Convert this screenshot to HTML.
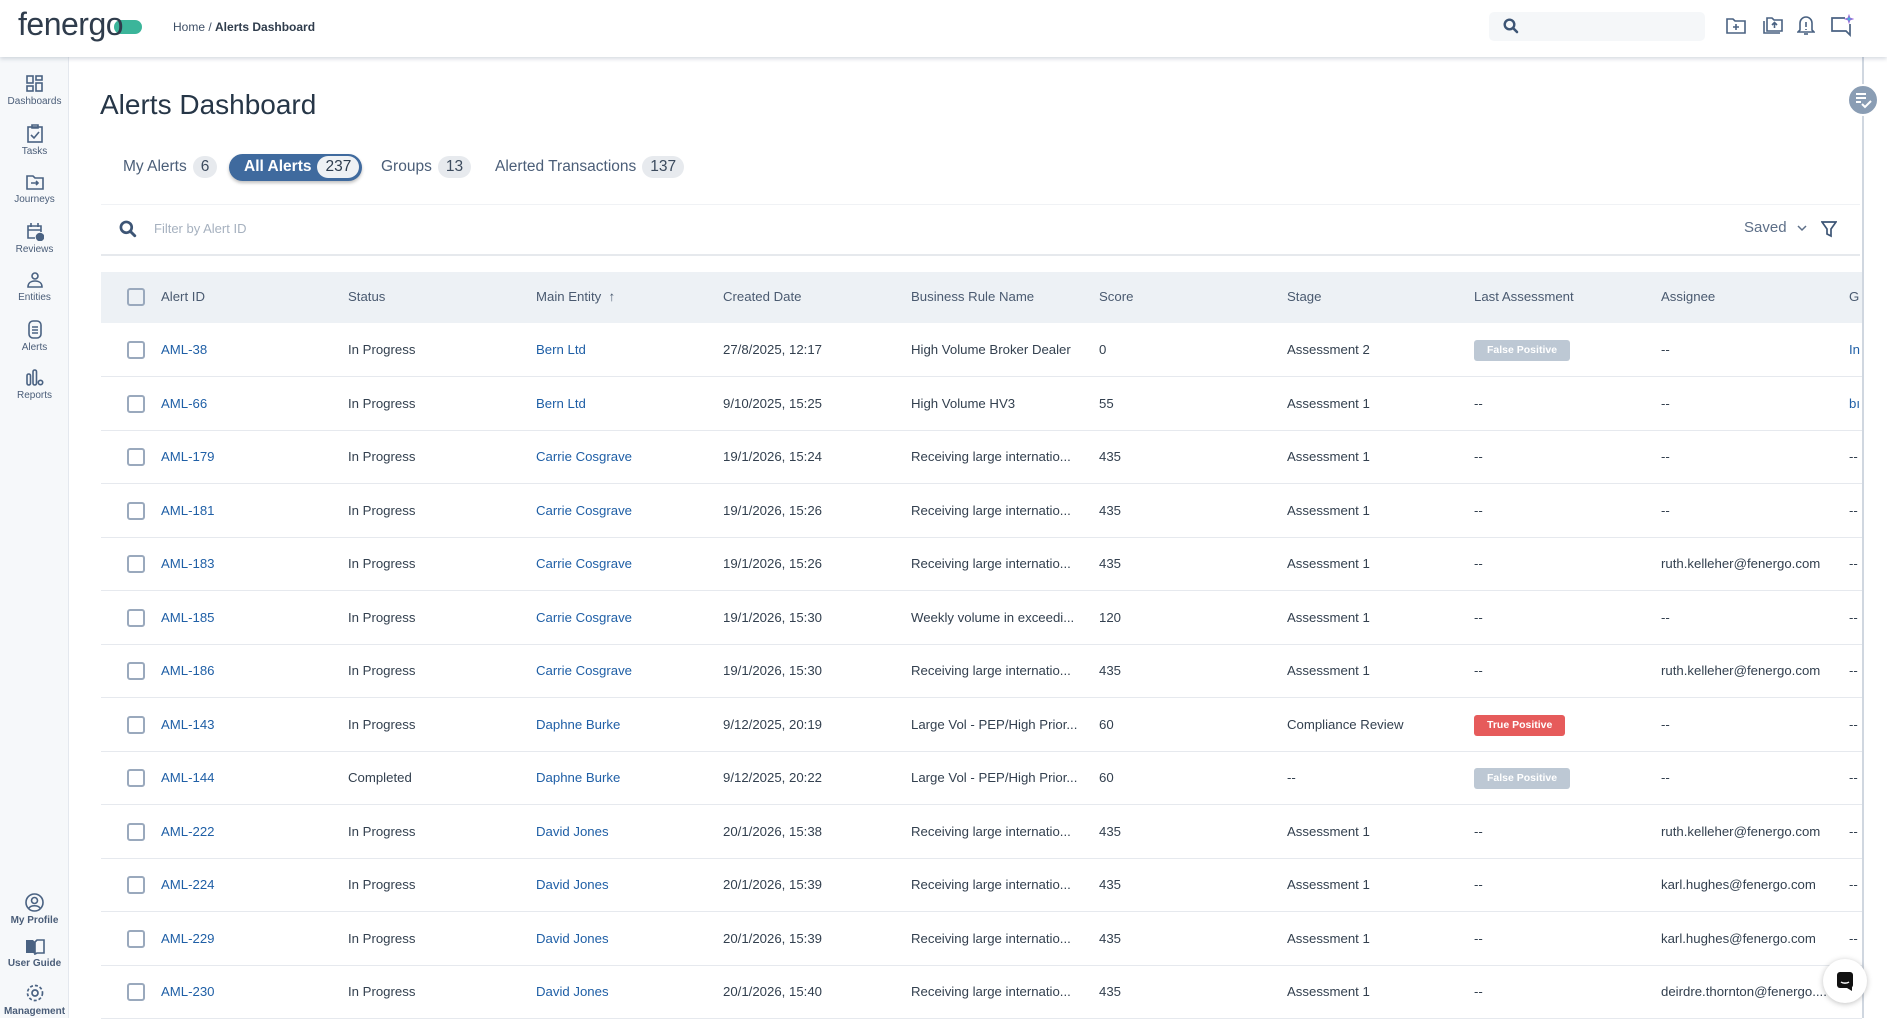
<!DOCTYPE html>
<html><head><meta charset="utf-8"><style>
*{margin:0;padding:0;box-sizing:border-box}
body{width:1887px;height:1018px;overflow:hidden;background:#fff;font-family:"Liberation Sans",sans-serif;color:#2e3d4f;position:relative}
.hdr{position:absolute;left:0;top:0;width:1887px;height:57px;background:#fff;box-shadow:0 2px 4px rgba(60,80,110,.2);z-index:5}
.side{position:absolute;left:0;top:57px;width:69px;height:961px;background:#f6f8fa;border-right:1px solid #e4e8ee}
.si{position:absolute;left:0;width:69px;text-align:center;font-size:10px;color:#4a5d78}
.si svg{display:block;margin:0 auto 3px}
.abs{position:absolute}
.tab{position:absolute;top:156px;font-size:15.5px;color:#4b5e78;height:22px;line-height:22px}
.bd{display:inline-block;background:#e7eaee;border-radius:11px;padding:0 8px;margin-left:6px;color:#3c4b5e}
.row{position:absolute;left:101px;width:1761px;height:54px;border-bottom:1px solid #e6e9ee;font-size:13.2px;color:#33404f}
.row span{position:absolute;top:0;line-height:53px;white-space:nowrap}
.cb{position:absolute;left:26px;top:18px;width:18px;height:18px;border:2px solid #9aa9bd;border-radius:3px;background:#fff}
.lk{color:#1f5fa6}
.fp,.tp{display:inline-block;line-height:20px;height:21px;padding:0 13px;border-radius:3px;color:#fff;font-weight:bold;font-size:10.5px;vertical-align:middle}
.fp{background:#bdc8d4}.tp{background:#e65b5b}
</style></head><body>
<div class="hdr">
 <div class="abs" style="left:18px;top:6px;font-size:32px;color:#2f3c4c;letter-spacing:-0.5px">fenerg<span style="position:relative">o<span style="position:absolute;left:8px;top:14px;width:28px;height:14px;border-radius:7px;background:#3bb59a;z-index:-1"></span></span></div>
 <div class="abs" style="left:173px;top:20px;font-size:12px;color:#3e4f66">Home / <b style="color:#2f3c4c">Alerts Dashboard</b></div>
 <div class="abs" style="left:1489px;top:12px;width:216px;height:29px;background:#f5f7f9;border-radius:5px"></div>
 <svg class="abs" style="left:1503px;top:18px" width="16" height="16" viewBox="0 0 16 16"><circle cx="6.5" cy="6.5" r="4.8" fill="none" stroke="#3d5575" stroke-width="2.4"/><path d="M10 10l4 4" stroke="#3d5575" stroke-width="2.6" stroke-linecap="round"/></svg>
 <svg class="abs" style="left:1725px;top:16px" width="22" height="20" viewBox="0 0 22 20" fill="none" stroke="#4a6282" stroke-width="1.6"><path d="M2 3h6l2 2h10v12H2z"/><path d="M11 8v6M8 11h6"/></svg>
 <svg class="abs" style="left:1762px;top:15px" width="22" height="20" viewBox="0 0 22 20" fill="none" stroke="#4a6282" stroke-width="1.6"><path d="M5 3h5l2 2h8v11H5z"/><path d="M2 6v12h16"/><path d="M12.5 13V8M10 10l2.5-2.5L15 10"/></svg>
 <svg class="abs" style="left:1797px;top:15px" width="18" height="22" viewBox="0 0 18 22" fill="none" stroke="#4a6282" stroke-width="1.6"><path d="M9 2a6 6 0 0 1 6 6v7l2 2H1l2-2V8a6 6 0 0 1 6-6z"/><path d="M9 7v5M9 14v1"/><path d="M7 19h4"/></svg>
 <svg class="abs" style="left:1830px;top:14px" width="24" height="24" viewBox="0 0 24 24" fill="none" stroke="#4a6282" stroke-width="1.7"><path d="M15 4H2v13h14l4 4V10"/><path d="M19 1l1 3 3 1-3 1-1 3-1-3-3-1 3-1z" fill="#39b6d8" stroke="#9a6ad8" stroke-width=".8"/></svg>
</div>
<div class="side">
 <div class="si" style="top:18px"><svg width="18" height="18" viewBox="0 0 18 18" fill="none" stroke="#4a6282" stroke-width="1.6"><rect x="1" y="1" width="6" height="7"/><rect x="10" y="1" width="6" height="4"/><rect x="1" y="11" width="6" height="5"/><rect x="10" y="8" width="6" height="8"/></svg>Dashboards</div>
 <div class="si" style="top:67px"><svg width="18" height="19" viewBox="0 0 18 19" fill="none" stroke="#4a6282" stroke-width="1.6"><rect x="2" y="3" width="14" height="15"/><path d="M6 1h6v3H6zM5 11l3 3 5-6"/></svg>Tasks</div>
 <div class="si" style="top:116px"><svg width="18" height="18" viewBox="0 0 18 18" fill="none" stroke="#4a6282" stroke-width="1.6"><path d="M1 3h6l2 2h8v11H1z"/><path d="M5 10h7M10 8l2 2-2 2"/></svg>Journeys</div>
 <div class="si" style="top:165px"><svg width="18" height="19" viewBox="0 0 18 19" fill="none" stroke="#4a6282" stroke-width="1.6"><path d="M9 16H2V4h13v6M2 8h13M5 1v4M12 1v4"/><circle cx="14" cy="15" r="3.5" fill="#4a6282"/></svg>Reviews</div>
 <div class="si" style="top:214px"><svg width="18" height="18" viewBox="0 0 18 18" fill="none" stroke="#4a6282" stroke-width="1.6"><circle cx="9" cy="5" r="3"/><path d="M2 16c0-4 3-6 7-6s7 2 7 6z"/></svg>Entities</div>
 <div class="si" style="top:262px"><svg width="18" height="20" viewBox="0 0 18 20" fill="none" stroke="#4a6282" stroke-width="1.6"><rect x="3" y="2" width="12" height="17" rx="4"/><path d="M6 8h6M6 11h6M6 14h6"/></svg>Alerts</div>
 <div class="si" style="top:312px"><svg width="18" height="18" viewBox="0 0 18 18" fill="none" stroke="#4a6282" stroke-width="1.6"><rect x="1" y="5" width="3.5" height="11" rx="1.7"/><rect x="7" y="1" width="3.5" height="15" rx="1.7"/><circle cx="14.5" cy="13.5" r="2.2"/></svg>Reports</div>
 <div class="si" style="top:836px;font-weight:bold"><svg width="19" height="19" viewBox="0 0 19 19" fill="none" stroke="#4a6282" stroke-width="1.6"><circle cx="9.5" cy="9.5" r="8.5"/><circle cx="9.5" cy="7.5" r="3"/><path d="M4 15c2-3 9-3 11 0"/></svg>My Profile</div>
 <div class="si" style="top:882px;font-weight:bold"><svg width="20" height="16" viewBox="0 0 20 16" fill="#4a6282"><path d="M1 1h7l2 2v12l-2-1H1z"/><path d="M19 1h-7l-2 2v12l2-1h7z" fill="none" stroke="#4a6282" stroke-width="1.6"/></svg>User Guide</div>
 <div class="si" style="top:926px;font-weight:bold"><svg width="20" height="20" viewBox="0 0 20 20" fill="none" stroke="#4a6282" stroke-width="1.7"><circle cx="10" cy="10" r="3"/><circle cx="10" cy="10" r="7.5" stroke-dasharray="3 2"/></svg>Management</div>
</div>
<div class="abs" style="left:1862px;top:57px;width:2px;height:961px;background:#d0d7e0"></div>
<div class="abs" style="left:1847px;top:84px;width:32px;height:32px;border-radius:50%;background:#8a9db4;border:2px solid #fff"></div>
<svg class="abs" style="left:1854px;top:91px" width="18" height="18" viewBox="0 0 18 18" fill="none" stroke="#fff" stroke-width="2"><path d="M2 3h10M2 7h10M2 11h5M8 13l3 3 6-6"/></svg>

<div class="abs" style="left:100px;top:89px;font-size:28px;color:#263647">Alerts Dashboard</div>
<div class="tab" style="left:123px">My Alerts<span class="bd">6</span></div>
<div class="abs" style="left:229px;top:154px;width:133px;height:27px;border-radius:14px;background:#3f6a9e;box-shadow:0 2px 3px rgba(0,0,0,.25)"></div>
<div class="tab" style="left:244px;color:#fff;font-weight:bold">All Alerts<span class="bd" style="background:#eef1f4;font-weight:normal;color:#2e3d4f">237</span></div>
<div class="tab" style="left:381px">Groups<span class="bd">13</span></div>
<div class="tab" style="left:495px">Alerted Transactions<span class="bd">137</span></div>

<div class="abs" style="left:101px;top:204px;width:1759px;height:52px;border-top:1px solid #f0f2f5;border-bottom:2px solid #e6e9ed"></div>
<svg class="abs" style="left:119px;top:220px" width="18" height="18" viewBox="0 0 16 16"><circle cx="6.5" cy="6.5" r="4.8" fill="none" stroke="#3d5575" stroke-width="2.4"/><path d="M10 10l4 4" stroke="#3d5575" stroke-width="2.6" stroke-linecap="round"/></svg>
<div class="abs" style="left:154px;top:221px;font-size:13px;color:#a6b1bf">Filter by Alert ID</div>
<div class="abs" style="left:1744px;top:219px;font-size:15px;color:#5d6f88">Saved</div>
<svg class="abs" style="left:1797px;top:224px" width="10" height="8" viewBox="0 0 10 8" fill="none" stroke="#5d6f88" stroke-width="1.5"><path d="M1 2l4 4 4-4"/></svg>
<svg class="abs" style="left:1821px;top:221px" width="16" height="17" viewBox="0 0 16 17" fill="none" stroke="#3d5575" stroke-width="1.7"><path d="M1 1h14l-5 7v7l-4-2V8z"/></svg>

<div class="abs" style="left:101px;top:272px;width:1761px;height:51px;background:#edf1f5;font-size:13.2px;color:#4a5a70">
 <div class="cb" style="top:16px;background:#edf1f5"></div>
 <span class="abs" style="left:60px;top:17px">Alert ID</span>
 <span class="abs" style="left:247px;top:17px">Status</span>
 <span class="abs" style="left:435px;top:17px">Main Entity &nbsp;↑</span>
 <span class="abs" style="left:622px;top:17px">Created Date</span>
 <span class="abs" style="left:810px;top:17px">Business Rule Name</span>
 <span class="abs" style="left:998px;top:17px">Score</span>
 <span class="abs" style="left:1186px;top:17px">Stage</span>
 <span class="abs" style="left:1373px;top:17px">Last Assessment</span>
 <span class="abs" style="left:1560px;top:17px">Assignee</span>
 <span class="abs" style="left:1748px;top:17px">G</span>
</div>

<div class="row" style="top:323px"><div class="cb"></div><span class="lk" style="left:60px">AML-38</span><span style="left:247px">In Progress</span><span class="lk" style="left:435px">Bern Ltd</span><span style="left:622px">27/8/2025, 12:17</span><span style="left:810px">High Volume Broker Dealer</span><span style="left:998px">0</span><span style="left:1186px">Assessment 2</span><span style="left:1373px"><i class="fp" style="font-style:normal">False Positive</i></span><span style="left:1560px">--</span><span class="lk" style="left:1748px">In</span></div>
<div class="row" style="top:377px"><div class="cb"></div><span class="lk" style="left:60px">AML-66</span><span style="left:247px">In Progress</span><span class="lk" style="left:435px">Bern Ltd</span><span style="left:622px">9/10/2025, 15:25</span><span style="left:810px">High Volume HV3</span><span style="left:998px">55</span><span style="left:1186px">Assessment 1</span><span style="left:1373px">--</span><span style="left:1560px">--</span><span class="lk" style="left:1748px">bı</span></div>
<div class="row" style="top:430px"><div class="cb"></div><span class="lk" style="left:60px">AML-179</span><span style="left:247px">In Progress</span><span class="lk" style="left:435px">Carrie Cosgrave</span><span style="left:622px">19/1/2026, 15:24</span><span style="left:810px">Receiving large internatio...</span><span style="left:998px">435</span><span style="left:1186px">Assessment 1</span><span style="left:1373px">--</span><span style="left:1560px">--</span><span style="left:1748px">--</span></div>
<div class="row" style="top:484px"><div class="cb"></div><span class="lk" style="left:60px">AML-181</span><span style="left:247px">In Progress</span><span class="lk" style="left:435px">Carrie Cosgrave</span><span style="left:622px">19/1/2026, 15:26</span><span style="left:810px">Receiving large internatio...</span><span style="left:998px">435</span><span style="left:1186px">Assessment 1</span><span style="left:1373px">--</span><span style="left:1560px">--</span><span style="left:1748px">--</span></div>
<div class="row" style="top:537px"><div class="cb"></div><span class="lk" style="left:60px">AML-183</span><span style="left:247px">In Progress</span><span class="lk" style="left:435px">Carrie Cosgrave</span><span style="left:622px">19/1/2026, 15:26</span><span style="left:810px">Receiving large internatio...</span><span style="left:998px">435</span><span style="left:1186px">Assessment 1</span><span style="left:1373px">--</span><span style="left:1560px">ruth.kelleher@fenergo.com</span><span style="left:1748px">--</span></div>
<div class="row" style="top:591px"><div class="cb"></div><span class="lk" style="left:60px">AML-185</span><span style="left:247px">In Progress</span><span class="lk" style="left:435px">Carrie Cosgrave</span><span style="left:622px">19/1/2026, 15:30</span><span style="left:810px">Weekly volume in exceedi...</span><span style="left:998px">120</span><span style="left:1186px">Assessment 1</span><span style="left:1373px">--</span><span style="left:1560px">--</span><span style="left:1748px">--</span></div>
<div class="row" style="top:644px"><div class="cb"></div><span class="lk" style="left:60px">AML-186</span><span style="left:247px">In Progress</span><span class="lk" style="left:435px">Carrie Cosgrave</span><span style="left:622px">19/1/2026, 15:30</span><span style="left:810px">Receiving large internatio...</span><span style="left:998px">435</span><span style="left:1186px">Assessment 1</span><span style="left:1373px">--</span><span style="left:1560px">ruth.kelleher@fenergo.com</span><span style="left:1748px">--</span></div>
<div class="row" style="top:698px"><div class="cb"></div><span class="lk" style="left:60px">AML-143</span><span style="left:247px">In Progress</span><span class="lk" style="left:435px">Daphne Burke</span><span style="left:622px">9/12/2025, 20:19</span><span style="left:810px">Large Vol - PEP/High Prior...</span><span style="left:998px">60</span><span style="left:1186px">Compliance Review</span><span style="left:1373px"><i class="tp" style="font-style:normal">True Positive</i></span><span style="left:1560px">--</span><span style="left:1748px">--</span></div>
<div class="row" style="top:751px"><div class="cb"></div><span class="lk" style="left:60px">AML-144</span><span style="left:247px">Completed</span><span class="lk" style="left:435px">Daphne Burke</span><span style="left:622px">9/12/2025, 20:22</span><span style="left:810px">Large Vol - PEP/High Prior...</span><span style="left:998px">60</span><span style="left:1186px">--</span><span style="left:1373px"><i class="fp" style="font-style:normal">False Positive</i></span><span style="left:1560px">--</span><span style="left:1748px">--</span></div>
<div class="row" style="top:805px"><div class="cb"></div><span class="lk" style="left:60px">AML-222</span><span style="left:247px">In Progress</span><span class="lk" style="left:435px">David Jones</span><span style="left:622px">20/1/2026, 15:38</span><span style="left:810px">Receiving large internatio...</span><span style="left:998px">435</span><span style="left:1186px">Assessment 1</span><span style="left:1373px">--</span><span style="left:1560px">ruth.kelleher@fenergo.com</span><span style="left:1748px">--</span></div>
<div class="row" style="top:858px"><div class="cb"></div><span class="lk" style="left:60px">AML-224</span><span style="left:247px">In Progress</span><span class="lk" style="left:435px">David Jones</span><span style="left:622px">20/1/2026, 15:39</span><span style="left:810px">Receiving large internatio...</span><span style="left:998px">435</span><span style="left:1186px">Assessment 1</span><span style="left:1373px">--</span><span style="left:1560px">karl.hughes@fenergo.com</span><span style="left:1748px">--</span></div>
<div class="row" style="top:912px"><div class="cb"></div><span class="lk" style="left:60px">AML-229</span><span style="left:247px">In Progress</span><span class="lk" style="left:435px">David Jones</span><span style="left:622px">20/1/2026, 15:39</span><span style="left:810px">Receiving large internatio...</span><span style="left:998px">435</span><span style="left:1186px">Assessment 1</span><span style="left:1373px">--</span><span style="left:1560px">karl.hughes@fenergo.com</span><span style="left:1748px">--</span></div>
<div class="row" style="top:965px"><div class="cb"></div><span class="lk" style="left:60px">AML-230</span><span style="left:247px">In Progress</span><span class="lk" style="left:435px">David Jones</span><span style="left:622px">20/1/2026, 15:40</span><span style="left:810px">Receiving large internatio...</span><span style="left:998px">435</span><span style="left:1186px">Assessment 1</span><span style="left:1373px">--</span><span style="left:1560px">deirdre.thornton@fenergo....</span><span style="left:1748px">--</span></div>

<div class="abs" style="left:1823px;top:959px;width:44px;height:44px;border-radius:50%;background:#fff;box-shadow:0 1px 6px rgba(0,0,0,.25)"></div>
<svg class="abs" style="left:1835px;top:971px" width="20" height="20" viewBox="0 0 20 20"><rect x="2" y="1" width="16" height="16" rx="3" fill="#111"/><path d="M6 11c2 1.5 6 1.5 8 0" stroke="#fff" stroke-width="1.4" fill="none"/><path d="M12 17l5 3v-4" fill="#111"/></svg>
</body></html>
